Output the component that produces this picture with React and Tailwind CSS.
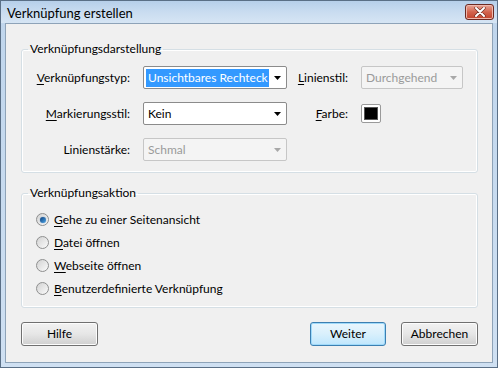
const font = { fontFamily: '"Segoe UI", Lato, "Noto Sans", sans-serif' };

function Select({ value, disabled, focused, className }) {
  return (
    <div
      className={
        "h-[23px] flex items-center rounded-[2px] border " +
        (disabled ? "border-[#c6c6c6] bg-[#f4f4f4] text-[#9a9a9a] " : "border-[#8b8b8b] bg-white text-black ") +
        className
      }
    >
      <div className="flex-1 min-w-0 pl-[2px] overflow-hidden">
        <span
          className={
            "inline-block whitespace-nowrap px-[2px] leading-[18px] " +
            (focused ? "bg-[#3399ff] text-white" : "")
          }
        >
          {value}
        </span>
      </div>
      <div className="w-[17px] h-full flex items-center justify-center">
        <svg width="7" height="4" viewBox="0 0 7 4">
          <path d="M0 0H7L3.5 4Z" fill={disabled ? "#a8a8a8" : "#000"} />
        </svg>
      </div>
    </div>
  );
}

function Radio({ checked, accel, rest }) {
  return (
    <div className="h-[23px] flex items-center gap-[5px]">
      <div className="w-[13px] h-[13px] rounded-full border border-[#8e8f8f] bg-gradient-to-br from-[#d2d2d2] to-[#fbfbfb] flex items-center justify-center">
        {checked && (
          <div className="w-[6px] h-[6px] rounded-full bg-gradient-to-br from-[#0f3f7c] to-[#4da7e8] shadow-[0_0_1px_#2a6fb5]" />
        )}
      </div>
      <span className="whitespace-nowrap">
        <span className="underline underline-offset-2">{accel}</span>
        {rest}
      </span>
    </div>
  );
}

function Button({ label, primary, className }) {
  return (
    <button
      type="button"
      className={
        "h-[24px] rounded-[3px] border text-black " +
        (primary
          ? "border-[#3c7fb1] bg-gradient-to-b from-[#eaf6fd] via-[#d9f0fc] to-[#bee6fd] shadow-[inset_0_0_0_1px_#9fdafa] "
          : "border-[#707070] bg-gradient-to-b from-[#f2f2f2] via-[#e6e6e6] to-[#cfcfcf] shadow-[inset_0_0_0_1px_#fcfcfc] ") +
        className
      }
    >
      {label}
    </button>
  );
}

export default function App() {
  return (
    <div
      style={font}
      className="w-[498px] h-[368px] flex flex-col bg-gradient-to-b from-[#bfd5ec] to-[#cfe0f2] border border-[#5a6f86] text-[12px] text-black"
    >
      {/* title bar */}
      <div className="h-[22px] flex items-start justify-between pl-[6px] pr-[3px] bg-gradient-to-b from-[#b6cfea] via-[#c9dcf0] to-[#d6e5f4]">
        <span className="mt-[4px] text-[13px] leading-[16px] text-black">Verknüpfung erstellen</span>
        <div className="w-[29px] h-[16px] mt-[3px] rounded-[3px] border border-[#6d2a22] bg-gradient-to-b from-[#e8a496] via-[#d2644e] to-[#c2432c] flex items-center justify-center shadow-[inset_0_0_0_1px_#eeb9ae]">
          <svg width="12" height="10" viewBox="0 0 12 10">
            <path d="M2 1L10 9M10 1L2 9" stroke="#6a2a20" strokeWidth="3.2" strokeLinecap="round" />
            <path d="M2 1L10 9M10 1L2 9" stroke="#fff" strokeWidth="2" strokeLinecap="round" />
          </svg>
        </div>
      </div>

      {/* body */}
      <div className="flex-1 mx-[4px] mb-[4px] border border-[#8ea3b8] bg-[#f0f0f0] flex flex-col pl-[15px] pr-[14px]">
        <fieldset className="mt-[17px] border border-[#d5dfe5] rounded-[3px] pl-0 pb-[11px] shadow-[inset_0_0_0_1px_#fff]">
          <legend className="ml-[6px] px-[2px] leading-[16px]">Verknüpfungsdarstellung</legend>
          <div className="pt-[9px] grid grid-cols-[108px_144px_48px_102px] gap-x-[13px] gap-y-[13px] items-center">
            <span className="justify-self-end whitespace-nowrap">
              <span className="underline underline-offset-2">V</span>erknüpfungstyp:
            </span>
            <Select value="Unsichtbares Rechteck" focused className="w-[144px]" />
            <span className="justify-self-end whitespace-nowrap">
              <span className="underline underline-offset-2">L</span>inienstil:
            </span>
            <Select value="Durchgehend" disabled className="w-[102px]" />

            <span className="justify-self-end whitespace-nowrap">
              <span className="underline underline-offset-2">M</span>arkierungsstil:
            </span>
            <Select value="Kein" className="w-[144px]" />
            <span className="justify-self-end whitespace-nowrap">
              <span className="underline underline-offset-2">F</span>arbe:
            </span>
            <div className="w-[20px] h-[19px] rounded-[2px] border border-[#9a9a9a] bg-white flex items-center justify-center">
              <div className="w-[14px] h-[13px] bg-black border border-[#555]" />
            </div>

            <span className="justify-self-end whitespace-nowrap">Linienstärke:</span>
            <Select value="Schmal" disabled className="w-[144px]" />
          </div>
        </fieldset>

        <fieldset className="mt-[12px] border border-[#d5dfe5] rounded-[3px] pl-[14px] pt-[7px] pb-[7px] shadow-[inset_0_0_0_1px_#fff]">
          <legend className="ml-[-8px] px-[2px] leading-[16px]">Verknüpfungsaktion</legend>
          <Radio checked accel="G" rest="ehe zu einer Seitenansicht" />
          <Radio accel="D" rest="atei öffnen" />
          <Radio accel="W" rest="ebseite öffnen" />
          <Radio accel="B" rest="enutzerdefinierte Verknüpfung" />
        </fieldset>

        <div className="mt-[14px] flex items-center">
          <Button label="Hilfe" className="w-[77px]" />
          <div className="flex-1" />
          <Button label="Weiter" primary className="w-[76px]" />
          <Button label="Abbrechen" className="w-[77px] ml-[15px]" />
        </div>
      </div>
    </div>
  );
}
